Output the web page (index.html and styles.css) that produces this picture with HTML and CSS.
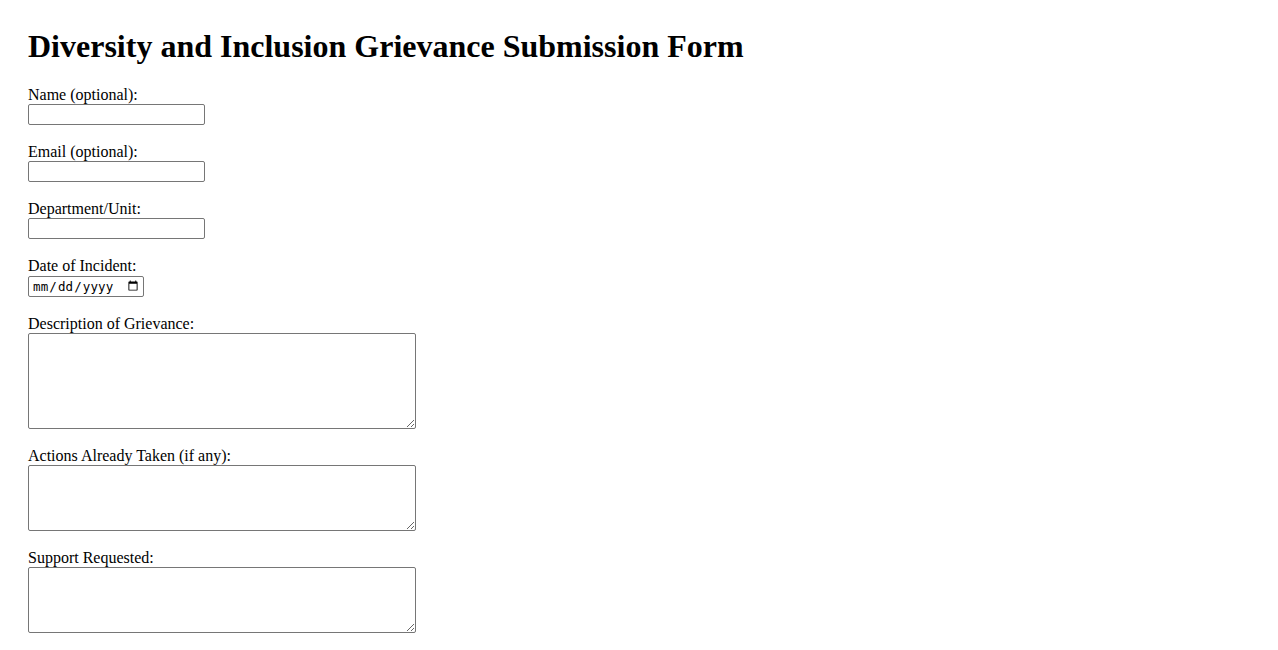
FILE: index.html
```html
<!DOCTYPE html>
<html lang="en">
<head>
<meta charset="utf-8">
<title>Diversity and Inclusion Grievance Submission Form</title>
<link rel="stylesheet" href="styles.css">
</head>
<body>
<h1 class="title">Diversity and Inclusion Grievance Submission Form</h1>
<form class="form">
  <div class="field">
    <label class="label" for="name">Name (optional):</label>
    <input class="text-input" type="text" id="name" name="name">
  </div>
  <div class="field">
    <label class="label" for="email">Email (optional):</label>
    <input class="text-input" type="email" id="email" name="email">
  </div>
  <div class="field">
    <label class="label" for="dept">Department/Unit:</label>
    <input class="text-input" type="text" id="dept" name="dept">
  </div>
  <div class="field">
    <label class="label" for="date">Date of Incident:</label>
    <input class="date-input" type="date" id="date" name="date">
  </div>
  <div class="field">
    <label class="label" for="desc">Description of Grievance:</label>
    <textarea class="area area-tall" id="desc" name="desc"></textarea>
  </div>
  <div class="field">
    <label class="label" for="actions">Actions Already Taken (if any):</label>
    <textarea class="area area-short" id="actions" name="actions"></textarea>
  </div>
  <div class="field">
    <label class="label" for="support">Support Requested:</label>
    <textarea class="area area-short" id="support" name="support"></textarea>
  </div>
</form>
</body>
</html>
```

FILE: styles.css
```css
html, body {
  background: #ffffff;
}
body {
  margin: 0;
  padding: 28px;
  font-family: "Liberation Serif", "Times New Roman", serif;
  font-size: 16px;
  color: #000;
}
.title {
  margin: 0 0 21px;
  font-size: 32px;
  font-weight: bold;
  line-height: 37px;
}
.form {
  display: flex;
  flex-direction: column;
  gap: 18px;
  align-items: flex-start;
}
.field {
  display: flex;
  flex-direction: column;
  align-items: flex-start;
}
.label {
  display: block;
  line-height: 18px;
}
.text-input,
.date-input,
.area {
  box-sizing: border-box;
  margin: 0;
  border: 1px solid #767676;
  border-radius: 2px;
  background: #fff;
  font-family: "Liberation Sans", Arial, sans-serif;
  font-size: 13.33px;
}
.text-input {
  width: 177px;
  height: 21px;
  padding: 1px 2px;
}
.date-input {
  width: 116px;
  height: 21px;
  margin-top: 1px;
  padding: 1px 2px 1px 3px;
  font-family: "DejaVu Sans Mono", "Liberation Mono", monospace;
  font-size: 12.5px;
  letter-spacing: 0.1px;
  color: #000;
}
.area {
  width: 388px;
  padding: 2px;
  font-family: "Liberation Mono", monospace;
}
.area-tall {
  height: 96px;
}
.area-short {
  height: 66px;
}
```
